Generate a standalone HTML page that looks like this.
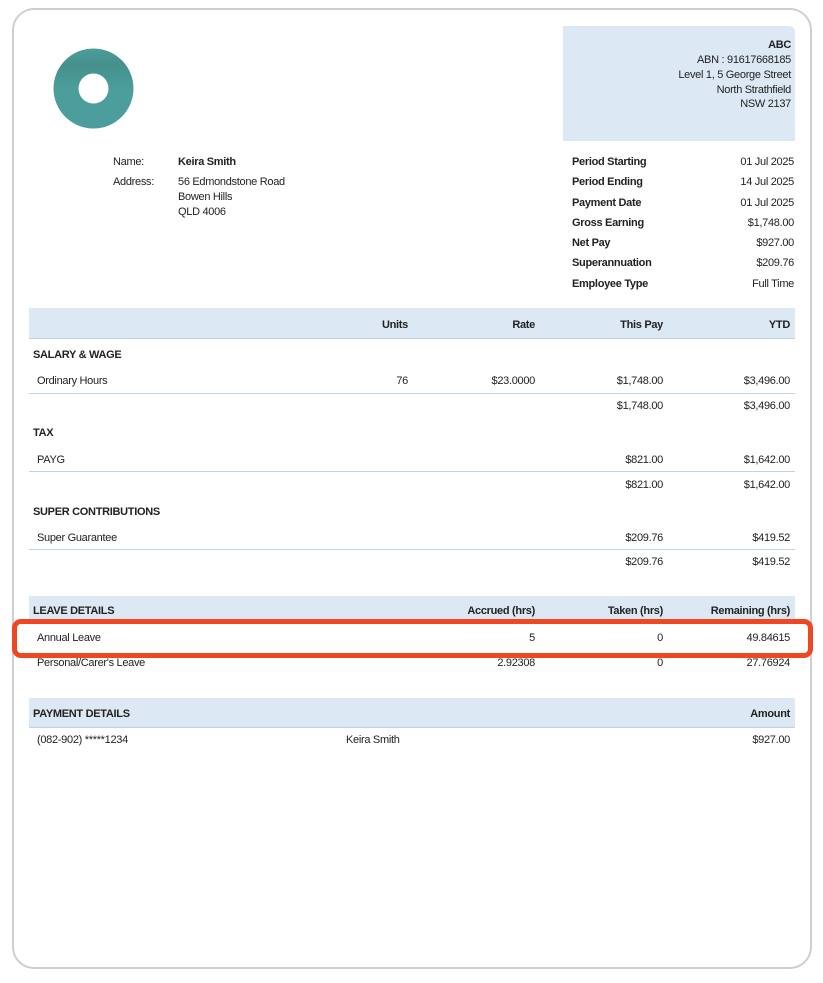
<!DOCTYPE html>
<html><head><meta charset="utf-8"><style>
*{margin:0;padding:0;box-sizing:border-box}
body{width:823px;height:983px;background:#fff;position:relative;font-family:"Liberation Sans",Arial,sans-serif;font-size:11px;color:#222;overflow:hidden}
.card{position:absolute;left:12px;top:8px;width:800px;height:961px;border:2px solid #cfcfcf;border-radius:22px;background:#fff}
.t{position:absolute;white-space:nowrap;line-height:13px;letter-spacing:-0.3px;margin-top:1px}
.r{text-align:right}
.b{font-weight:bold}
.band{position:absolute;left:29px;width:766px;background:#dce9f4}
.line{position:absolute;left:29px;width:766px;height:1px;background:#bcd3e8}
</style></head><body>
<div class="card"></div>
<svg style="position:absolute;left:53px;top:48px" width="81" height="81" viewBox="0 0 81 81">
<defs><linearGradient id="g" x1="0" y1="0" x2="0" y2="1"><stop offset="0" stop-color="#4b9e9b"/><stop offset="0.2" stop-color="#468f8c"/><stop offset="0.5" stop-color="#4b9e9b"/></linearGradient></defs>
<circle cx="40.5" cy="40.5" r="40" fill="url(#g)"/>
<circle cx="40.5" cy="40.5" r="15" fill="#fff"/>
</svg>
<div style="position:absolute;left:563px;top:26px;width:232px;height:115px;background:#dce9f4;border-top-right-radius:6px"></div>
<div class="t r b" style="right:32px;top:38px">ABC</div>
<div class="t r" style="right:32px;top:53px">ABN : 91617668185</div>
<div class="t r" style="right:32px;top:68px">Level 1, 5 George Street</div>
<div class="t r" style="right:32px;top:83px">North Strathfield</div>
<div class="t r" style="right:32px;top:97px">NSW 2137</div>

<div class="t" style="left:113px;top:155px">Name:</div>
<div class="t b" style="left:178px;top:155px">Keira Smith</div>
<div class="t" style="left:113px;top:175px">Address:</div>
<div class="t" style="left:178px;top:175px">56 Edmondstone Road</div>
<div class="t" style="left:178px;top:190px">Bowen Hills</div>
<div class="t" style="left:178px;top:205px">QLD 4006</div>

<div class="t b" style="left:572px;top:155px">Period Starting</div><div class="t r" style="right:29px;top:155px">01 Jul 2025</div>
<div class="t b" style="left:572px;top:175px">Period Ending</div><div class="t r" style="right:29px;top:175px">14 Jul 2025</div>
<div class="t b" style="left:572px;top:196px">Payment Date</div><div class="t r" style="right:29px;top:196px">01 Jul 2025</div>
<div class="t b" style="left:572px;top:216px">Gross Earning</div><div class="t r" style="right:29px;top:216px">$1,748.00</div>
<div class="t b" style="left:572px;top:236px">Net Pay</div><div class="t r" style="right:29px;top:236px">$927.00</div>
<div class="t b" style="left:572px;top:256px">Superannuation</div><div class="t r" style="right:29px;top:256px">$209.76</div>
<div class="t b" style="left:572px;top:277px">Employee Type</div><div class="t r" style="right:29px;top:277px">Full Time</div>

<div class="band" style="top:308px;height:30px"></div>
<div class="line" style="top:338px"></div>
<div class="t r b" style="right:415px;top:318px">Units</div>
<div class="t r b" style="right:288px;top:318px">Rate</div>
<div class="t r b" style="right:160px;top:318px">This Pay</div>
<div class="t r b" style="right:33px;top:318px">YTD</div>

<div class="t b" style="left:33px;top:348px">SALARY &amp; WAGE</div>
<div class="t" style="left:37px;top:374px">Ordinary Hours</div>
<div class="t r" style="right:415px;top:374px">76</div>
<div class="t r" style="right:288px;top:374px">$23.0000</div>
<div class="t r" style="right:160px;top:374px">$1,748.00</div>
<div class="t r" style="right:33px;top:374px">$3,496.00</div>
<div class="line" style="top:393px"></div>
<div class="t r" style="right:160px;top:399px">$1,748.00</div>
<div class="t r" style="right:33px;top:399px">$3,496.00</div>

<div class="t b" style="left:33px;top:426px">TAX</div>
<div class="t" style="left:37px;top:453px">PAYG</div>
<div class="t r" style="right:160px;top:453px">$821.00</div>
<div class="t r" style="right:33px;top:453px">$1,642.00</div>
<div class="line" style="top:471px"></div>
<div class="t r" style="right:160px;top:478px">$821.00</div>
<div class="t r" style="right:33px;top:478px">$1,642.00</div>

<div class="t b" style="left:33px;top:505px">SUPER CONTRIBUTIONS</div>
<div class="t" style="left:37px;top:531px">Super Guarantee</div>
<div class="t r" style="right:160px;top:531px">$209.76</div>
<div class="t r" style="right:33px;top:531px">$419.52</div>
<div class="line" style="top:549px"></div>
<div class="t r" style="right:160px;top:555px">$209.76</div>
<div class="t r" style="right:33px;top:555px">$419.52</div>

<div class="band" style="top:596px;height:27px"></div>
<div class="t b" style="left:33px;top:604px">LEAVE DETAILS</div>
<div class="t r b" style="right:288px;top:604px">Accrued (hrs)</div>
<div class="t r b" style="right:160px;top:604px">Taken (hrs)</div>
<div class="t r b" style="right:33px;top:604px">Remaining (hrs)</div>
<div class="t" style="left:37px;top:631px">Annual Leave</div>
<div class="t r" style="right:288px;top:631px">5</div>
<div class="t r" style="right:160px;top:631px">0</div>
<div class="t r" style="right:33px;top:631px">49.84615</div>
<div class="t" style="left:37px;top:656px">Personal/Carer's Leave</div>
<div class="t r" style="right:288px;top:656px">2.92308</div>
<div class="t r" style="right:160px;top:656px">0</div>
<div class="t r" style="right:33px;top:656px">27.76924</div>
<div style="position:absolute;left:12px;top:619px;width:801px;height:39px;border:5px solid #f04723;border-radius:9px"></div>

<div class="band" style="top:698px;height:29px"></div>
<div class="line" style="top:727px"></div>
<div class="t b" style="left:33px;top:707px">PAYMENT DETAILS</div>
<div class="t r b" style="right:33px;top:707px">Amount</div>
<div class="t" style="left:37px;top:733px">(082-902) *****1234</div>
<div class="t" style="left:346px;top:733px">Keira Smith</div>
<div class="t r" style="right:33px;top:733px">$927.00</div>
</body></html>
